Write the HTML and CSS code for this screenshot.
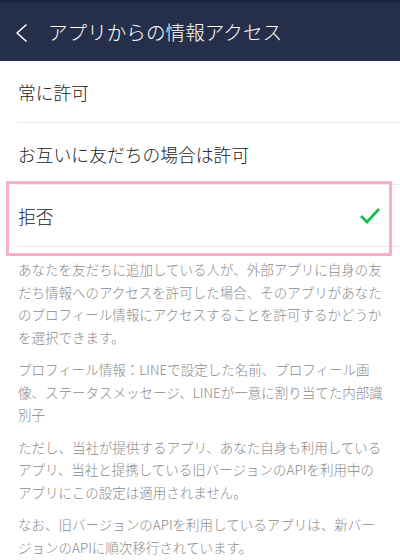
FILE: index.html
```html
<!DOCTYPE html>
<html lang="ja">
<head>
<meta charset="utf-8">
<link rel="stylesheet" href="styles.css">
</head>
<body>
<div class="screen">
  <header class="header">
    <svg class="back" width="14" height="20" viewBox="0 0 14 20"><polyline points="11,2 2,10 11,18" fill="none" stroke="#fff" stroke-width="1.6" stroke-linecap="round" stroke-linejoin="round"/></svg>
    <h1 class="title">アプリからの情報アクセス</h1>
  </header>
  <ul class="options">
    <li class="option"><span>常に許可</span></li>
    <li class="option"><span>お互いに友だちの場合は許可</span></li>
    <li class="option selected"><span>拒否</span>
      <svg class="check" width="22" height="18" viewBox="0 0 22 18"><polyline points="2,9 8,15 20,2" fill="none" stroke="#0dc045" stroke-width="2.6" stroke-linejoin="miter"/></svg>
    </li>
  </ul>
  <div class="highlight"></div>
  <div class="desc">
    <p>あなたを友だちに追加している人が、外部アプリに自身の友<br>だち情報へのアクセスを許可した場合、そのアプリがあなた<br>のプロフィール情報にアクセスすることを許可するかどうか<br>を選択できます。</p>
    <p>プロフィール情報：LINEで設定した名前、プロフィール画<br>像、ステータスメッセージ、LINEが一意に割り当てた内部識<br>別子</p>
    <p>ただし、当社が提供するアプリ、あなた自身も利用している<br>アプリ、当社と提携している旧バージョンのAPIを利用中の<br>アプリにこの設定は適用されません。</p>
    <p>なお、旧バージョンのAPIを利用しているアプリは、新バー<br>ジョンのAPIに順次移行されています。</p>
  </div>
</div>
</body>
</html>
```
FILE: styles.css
```css
* { box-sizing: border-box; }
html, body { margin: 0; padding: 0; background: #fff; }
body {
  font-family: "Noto Sans CJK JP", "Noto Sans", sans-serif;
  width: 400px;
  height: 560px;
  overflow: hidden;
}
.screen { position: relative; width: 400px; }
.header {
  height: 61px;
  background: #262f4a;
  border-top: 3px solid #1f2740;
  display: flex;
  align-items: center;
  padding-left: 15px;
}
.back { flex: none; margin-top: 1px; }
.title {
  margin: 0 0 0 19px;
  font-size: 19.6px;
  font-weight: 300;
  color: #fff;
  line-height: 1;
}
.options { list-style: none; margin: 0; padding: 0; }
.option {
  height: 62px;
  margin-left: 17px;
  padding: 0 18px 0 1px;
  border-bottom: 1px solid #ebebeb;
  display: flex;
  align-items: center;
  justify-content: space-between;
  font-size: 17.8px;
  font-weight: 300;
  color: #222;
}
.check { flex: none; margin-right: 1px; }
.highlight {
  position: absolute;
  left: 6px;
  top: 181px;
  width: 386px;
  height: 75px;
  border: 3px solid #f9afca;
  pointer-events: none;
}
.desc {
  padding: 11px 0 0 18px;
  color: #8a8a8a;
  font-size: 13.5px;
  font-weight: 300;
  line-height: 22.5px;
  white-space: nowrap;
}
.desc p { margin: 0 0 10px; }
```
